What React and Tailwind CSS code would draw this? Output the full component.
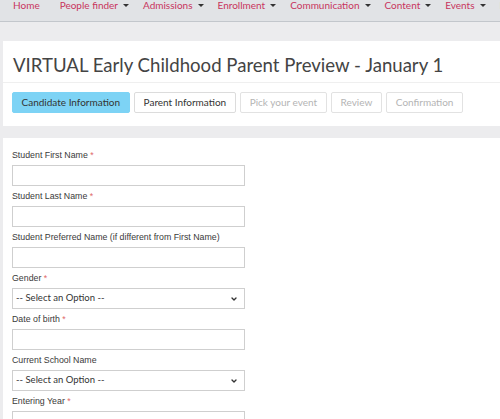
import { ChevronDown } from 'lucide-react';

const navItems = [
  { label: 'Home', caret: false },
  { label: 'People finder', caret: true },
  { label: 'Admissions', caret: true },
  { label: 'Enrollment', caret: true },
  { label: 'Communication', caret: true },
  { label: 'Content', caret: true },
  { label: 'Events', caret: true },
  { label: 'Reports', caret: true },
];

const tabs = [
  { label: 'Candidate Information', state: 'active' },
  { label: 'Parent Information', state: 'open' },
  { label: 'Pick your event', state: 'disabled' },
  { label: 'Review', state: 'disabled' },
  { label: 'Confirmation', state: 'disabled' },
];

const fields = [
  { label: 'Student First Name', required: true, type: 'text' },
  { label: 'Student Last Name', required: true, type: 'text' },
  { label: 'Student Preferred Name (if different from First Name)', required: false, type: 'text' },
  { label: 'Gender', required: true, type: 'select' },
  { label: 'Date of birth', required: true, type: 'text' },
  { label: 'Current School Name', required: false, type: 'select' },
  { label: 'Entering Year', required: true, type: 'text' },
];

function Caret() {
  return (
    <span className="ml-[5px] inline-block h-0 w-0 border-x-[3px] border-t-[3px] border-x-transparent border-t-[#333] align-middle" />
  );
}

function TabButton({ tab }) {
  const styles = {
    active: 'bg-[#7dd3f5] border-[#7dd3f5] text-[#333]',
    open: 'bg-white border-[#dcdcdc] text-[#333]',
    disabled: 'bg-white border-[#e2e2e2] text-[#b4b4b4]',
  };
  return (
    <div className={`h-[21px] px-[8.5px] flex items-center whitespace-nowrap rounded-[2px] border text-[10px] ${styles[tab.state]}`}>
      {tab.label}
    </div>
  );
}

function Field({ field }) {
  return (
    <div className="flex flex-col">
      <label className="h-[20px] pt-[5px] text-[8.8px] leading-[11px] text-[#3a3a3a] whitespace-nowrap font-['Liberation_Sans',Arial,sans-serif]">
        {field.label}
        {field.required && <span className="text-[#e06a6a]"> *</span>}
      </label>
      {field.type === 'select' ? (
        <div className="h-[21px] w-[233px] border border-[#cfcfcf] bg-white flex items-center justify-between pl-[3px] pr-[6px] text-[9.5px] text-[#333]">
          <span>-- Select an Option --</span>
          <ChevronDown className="h-[8px] w-[8px] text-[#333]" strokeWidth={4} />
        </div>
      ) : (
        <div className="h-[21px] w-[233px] border border-[#cfcfcf] bg-white" />
      )}
    </div>
  );
}

export default function App() {
  return (
    <div className="h-[419px] w-[500px] overflow-hidden bg-[#ececee] font-['Lato','Open_Sans',sans-serif]">
      <div className="h-[22px] border-b border-[#c3c7cc] bg-[#e1e3e6] overflow-hidden">
        <div className="flex items-start gap-[14px] pl-[13px] -mt-[2px] whitespace-nowrap text-[10px] text-[#c8345d]">
          {navItems.map((item, i) => (
            <span key={item.label} className={`flex items-center ${i === 1 ? 'ml-[6px]' : ''}`}>
              {item.label}
              {item.caret && <Caret />}
            </span>
          ))}
        </div>
      </div>

      <div className="ml-[3px] mt-[19px] bg-white">
        <div className="h-[42px] pt-[8px] border-b border-[#efefef] flex items-center pl-[10px]">
          <h1 className="text-[18.6px] text-[#444] whitespace-nowrap">VIRTUAL Early Childhood Parent Preview - January 1</h1>
        </div>
        <div className="flex gap-[4.5px] pl-[9px] pt-[9px] pb-[13px]">
          {tabs.map((tab) => (
            <TabButton key={tab.label} tab={tab} />
          ))}
        </div>
      </div>

      <div className="ml-[3px] mt-[12px] bg-white pl-[9px] pt-[7px]">
        {fields.map((field) => (
          <Field key={field.label} field={field} />
        ))}
      </div>
    </div>
  );
}
